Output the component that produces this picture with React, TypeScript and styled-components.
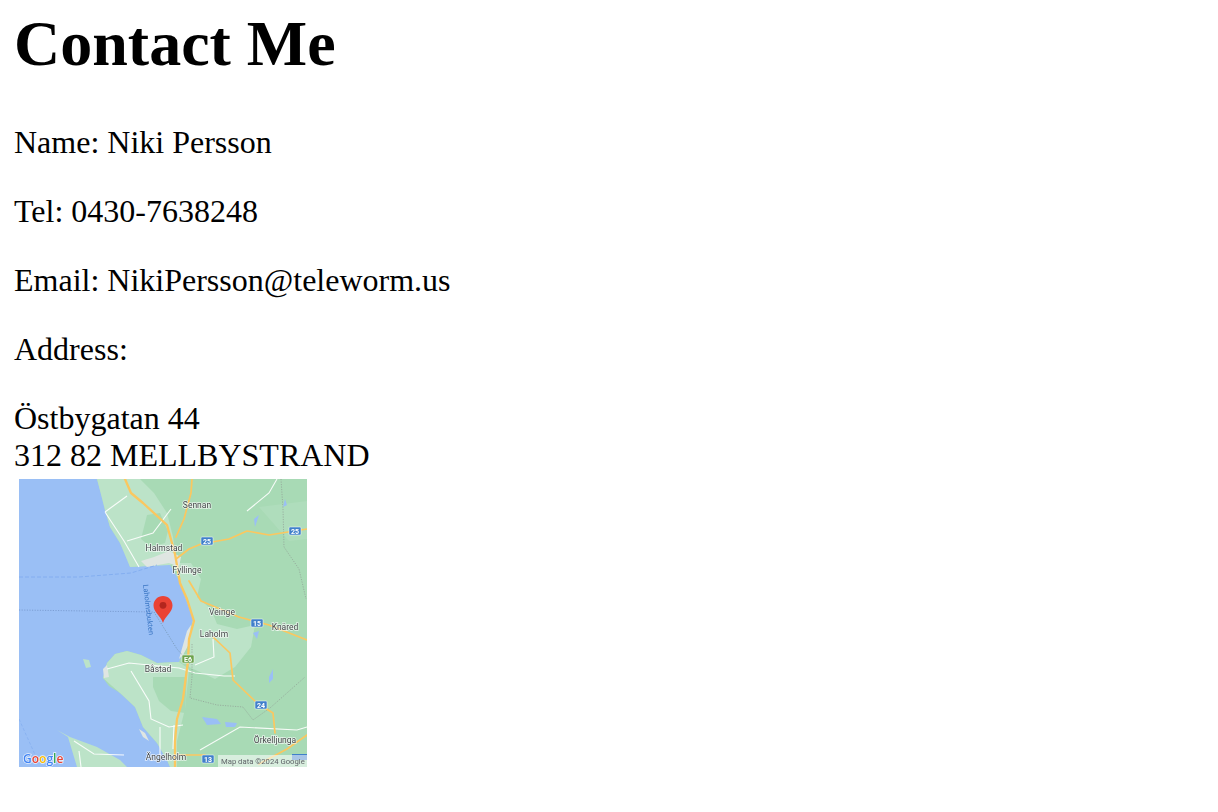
import React from "react";
import styled, { createGlobalStyle } from "styled-components";

const Global = createGlobalStyle`
  html, body { margin: 0; padding: 0; background: #fff; }
  body { font-family: "Liberation Serif", "Times New Roman", serif; color: #000; }
`;
const Page = styled.main`
  padding: 7px 14px 0;
  font-size: 32px;
  line-height: 36.8px;
`;
const Title = styled.h1`
  margin: 0 0 43.6px;
  font-size: 64px;
  line-height: 73.6px;
  font-weight: 700;
`;
const Line = styled.p`
  margin: 0 0 32px;
`;
const AddressBlock = styled.p`
  margin: 0;
  padding-top: 0.6px;
`;
const MapSvg = styled.svg`
  display: block;
  margin: 5.4px 0 0 5px;
  width: 288px;
  height: 288px;
`;
const Label = styled.text`
  font-family: Roboto, "Liberation Sans", sans-serif;
  font-size: 8.5px;
  fill: #45484a;
  text-anchor: middle;
  stroke: #ffffff;
  stroke-width: 1.6px;
  stroke-opacity: 0.7;
  paint-order: stroke;
`;
const ShieldText = styled.text`
  font-family: Roboto, "Liberation Sans", sans-serif;
  font-size: 7px;
  font-weight: 700;
  fill: #ffffff;
  text-anchor: middle;
`;
const WaterLabel = styled.text`
  font-family: Roboto, "Liberation Sans", sans-serif;
  font-size: 7.4px;
  fill: #3a76c4;
  text-anchor: middle;
`;
const Credit = styled.text`
  font-family: Roboto, "Liberation Sans", sans-serif;
  font-size: 7.7px;
  fill: #5f6368;
`;
const GoogleMark = styled.text`
  font-family: "Open Sans", "Liberation Sans", sans-serif;
  font-size: 12px;
  font-weight: 600;
  stroke: #ffffff;
  stroke-width: 1.5px;
  stroke-opacity: 0.8;
  paint-order: stroke;
`;

const WATER = "#9abff5";
const LAND = "#a8dab5";
const LIGHT = "#bce3c8";
const ROAD = "#fbc75f";
const URBAN = "#dfe6e2";

const shields: [number, number, string, string][] = [
  [188, 62, "25", "#3f7fca"],
  [276, 52, "25", "#3f7fca"],
  [238, 144, "15", "#3f7fca"],
  [169, 180, "E6", "#6da34d"],
  [242, 226, "24", "#3f7fca"],
  [189, 280, "13", "#3f7fca"],
];
const labels: [number, number, string][] = [
  [178, 29, "Sennan"],
  [145, 72, "Halmstad"],
  [168, 94, "Fyllinge"],
  [203, 136, "Veinge"],
  [195, 158, "Laholm"],
  [266, 151, "Knäred"],
  [139, 193, "Båstad"],
  [256, 264, "Örkelljunga"],
  [147, 281, "Ängelholm"],
];

function MapPicture() {
  return (
    <MapSvg viewBox="0 0 288 288" role="img" aria-label="Map">
      <defs>
        <filter id="soft" x="-5%" y="-5%" width="110%" height="110%">
          <feGaussianBlur stdDeviation="0.5" />
        </filter>
        <clipPath id="frame">
          <rect width="288" height="288" />
        </clipPath>
      </defs>
      <g clipPath="url(#frame)" filter="url(#soft)">
        <rect width="288" height="288" fill={WATER} />
        {/* mainland */}
        <path
          d="M78 0 L82 14 L86 31 L91 48 L101 64 L108 78 L111 88 L125 87 L138 86 L151 86 L157 96 L161 104 L167 120 L171 131 L174 141 L171 152 L168 161 L163 176 L160 183 L138 184 L122 176 L108 172 L96 175 L88 184 L84 199 L90 207 L101 214 L116 228 L124 248 L138 264 L148 281 L151 288 L288 288 L288 0 Z"
          fill={LAND}
        />
        {/* coastal lighter land */}
        <path
          d="M78 0 L86 31 L91 48 L101 64 L111 88 L151 86 L158 84 L154 58 L148 34 L135 14 L121 0 Z"
          fill={LIGHT}
        />
        <path d="M128 36 L141 34 L149 52 L146 64 L132 68 L122 60 Z" fill={LAND} />
        <path
          d="M158 84 L172 84 L182 100 L178 118 L192 130 L198 145 L218 150 L236 146 L232 168 L216 188 L196 200 L170 188 L171 152 L174 141 L171 131 L161 104 Z"
          fill={LIGHT}
        />
        <path
          d="M160 183 L138 184 L122 176 L108 172 L96 175 L88 184 L84 199 L101 214 L116 228 L124 248 L138 264 L148 281 L151 288 L158 288 L158 262 L166 230 L170 190 Z"
          fill={LIGHT}
        />
        <path d="M134 198 L168 198 L166 234 L152 232 L140 222 L134 208 Z" fill={LAND} />
        <path d="M240 28 L288 22 L288 60 L270 62 Z" fill={LIGHT} opacity="0.35" />
        <path d="M38 251 L51 258 L78 268 L101 281 L108 288 L58 288 L49 258 Z" fill={LIGHT} />
        <path d="M64 180 L70 181 L72 188 L67 189 Z" fill={LIGHT} />
        {/* towns */}
        <path d="M122 82 L135 78 L150 72 L162 78 L160 88 L150 84 L128 88 Z" fill={URBAN} />
        <path d="M84 190 L88 186 L90 198 L85 199 Z M120 250 L126 254 L130 262 L124 258 Z M168 152 L172 146 L170 165 L164 176 L160 180 Z" fill={URBAN} />
        {/* small lakes */}
        <path d="M183 238 L198 240 L202 245 L188 246 Z M206 243 L218 244 L216 248 L207 248 Z" fill={WATER} />
        <path d="M250 198 L254 190 L254 200 L250 204 Z M234 154 L240 152 L238 160 Z" fill={WATER} />
        <path d="M235 40 L240 36 L236 48 Z M266 20 L268 26 L264 28 Z" fill={WATER} />
        {/* water lines */}
        <path d="M0 98 L60 98 L112 94 L138 86" stroke="#7eaaef" strokeWidth="0.8" strokeDasharray="4 2" fill="none" />
        <path d="M0 131 L135 133" stroke="#6e8fc4" strokeWidth="0.7" strokeDasharray="1.2 1.4" fill="none" />
        <path d="M135 133 L158 170 L172 186" stroke="#6f8fa8" strokeWidth="0.7" strokeDasharray="1.2 1.4" fill="none" />
        <path d="M0 240 L18 280" stroke="#7eaaef" strokeWidth="0.6" strokeDasharray="3 2" fill="none" />
        {/* white minor roads */}
        <g stroke="#ffffff" strokeWidth="1.1" fill="none" opacity="0.9">
          <path d="M86 33 L108 17 M86 33 L105 62 L120 88 M108 62 L134 54 L152 30" />
          <path d="M88 190 L110 184 L160 189 L176 194 L205 197 L216 197" />
          <path d="M112 192 L130 222 L132 240 L150 248 L164 246 M141 248 L141 280 M155 246 L154 270" />
          <path d="M194 160 L195 178 L176 186" />
          <path d="M181 271 L221 248 L278 251 L288 248" />
          <path d="M55 262 L75 275 L105 276 M228 32 L250 14 L258 0" />
          <path d="M60 272 L62 288" />
        </g>
        {/* boundary */}
        <g stroke="#8f9c93" strokeWidth="0.7" strokeDasharray="1.2 1.3" fill="none">
          <path d="M262 0 L264 30 L265 68 L280 90 L287 120" />
          <path d="M173 165 L173 198 L171 219 L198 226 L224 228 L234 241 L251 229 L286 198" />
        </g>
        {/* yellow highways */}
        <g stroke={ROAD} fill="none" strokeLinecap="round" strokeLinejoin="round" strokeWidth="1.7">
          <path strokeWidth="2.3" d="M106 0 L112 14 L124 24 L148 46 L156 75 L161 104 L168 120 L175 142 L170 160 L169 182 L164 220 L158 240 L156 262 L156 288" />
          <path d="M173 0 L172 14 L165 40 L157 58" />
          <path d="M157 80 L170 70 L182 65 L210 60 L228 52 L250 56 L288 50" />
          <path d="M170 102 L182 122 L220 138 L231 141 L250 146 L288 161" />
          <path d="M194 158 L211 174 L214 201 L238 224 L254 234 L256 254" />
          <path d="M240 285 L268 270 L288 256 M160 276 L186 276" />
        </g>
        {shields.map(([x, y, t, c]) => (
          <g key={x + t}>
            <rect x={x - 6} y={y - 4} width="12" height="8" rx="1" fill={c} stroke="#fff" strokeWidth="0.5" />
            <ShieldText x={x} y={y + 2.5}>{t}</ShieldText>
          </g>
        ))}
        {labels.map(([x, y, t]) => (
          <Label key={t} x={x} y={y}>{t}</Label>
        ))}
        <WaterLabel transform="translate(127 131) rotate(83)">Laholmsbukten</WaterLabel>
        <rect x="273" y="275" width="15" height="6" fill="#3f7fca" />
        <rect x="199" y="276" width="89" height="12" fill="#fff" opacity="0.55" />
        <Credit x="202" y="284.5">Map data ©2024 Google</Credit>
        <GoogleMark x="4" y="284">
          <tspan fill="#4285f4">G</tspan>
          <tspan fill="#ea4335">o</tspan>
          <tspan fill="#fbbc05">o</tspan>
          <tspan fill="#4285f4">g</tspan>
          <tspan fill="#34a853">l</tspan>
          <tspan fill="#ea4335">e</tspan>
        </GoogleMark>
      </g>
      <path
        d="M144 117 C138.7 117 134.5 121.2 134.5 126.5 C134.5 133 141.5 136.5 144 144 C146.5 136.5 153.5 133 153.5 126.5 C153.5 121.2 149.3 117 144 117 Z"
        fill="#ea4335"
      />
      <circle cx="144" cy="126.3" r="3.4" fill="#b3261e" />
    </MapSvg>
  );
}

export default function App() {
  return (
    <Page>
      <Global />
      <Title>Contact Me</Title>
      <Line>Name: Niki Persson</Line>
      <Line>Tel: 0430-7638248</Line>
      <Line>Email: NikiPersson@teleworm.us</Line>
      <Line>Address:</Line>
      <AddressBlock>
        Östbygatan 44
        <br />
        312 82 MELLBYSTRAND
      </AddressBlock>
      <MapPicture />
    </Page>
  );
}
